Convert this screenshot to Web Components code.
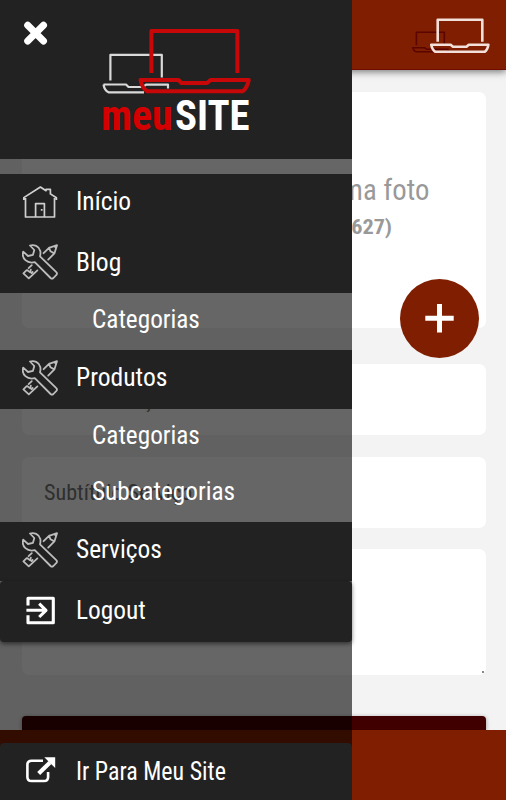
<!DOCTYPE html>
<html lang="pt-BR">
<head>
    <meta charset="UTF-8">
    <meta name="viewport" content="width=device-width, initial-scale=1.0">
    <title>meuSITE</title>
    <style>
        html, body {
            margin: 0;
            height: 100%;
            overflow: hidden;
            background: #f3f3f3;
            font-family: "Roboto Condensed", Roboto, "Liberation Sans", sans-serif;
            font-stretch: 75%;
        }
    </style>
</head>
<body>
    <site-app></site-app>

    <script>
        // small helper: every element of the page gets its styles and markup the same way
        function define(name, html, ready) {
            const template = document.createElement('template');
            template.innerHTML = html;
            customElements.define(name, class extends HTMLElement {
                constructor() {
                    super();
                    this.attachShadow({ mode: 'open' }).appendChild(template.content.cloneNode(true));
                }
                connectedCallback() {
                    if (ready) ready(this, this.shadowRoot);
                }
            });
        }

        const icons = {
            home: `<svg viewBox="22 184 36 36" width="36" height="36" fill="none" stroke="#d0d0d0" stroke-width="1.7" stroke-linejoin="round">
                <path d="M25.5 198V217H54.5V198M23.8 200V197.6L40.4 187L46 190.7V189.4H50.4V193.9L56.4 197.8V200"/>
                <path d="M35.6 217V203.6H44.4V217M40.8 209.8H42.6"/></svg>`,
            tools: `<svg viewBox="0 0 36 36" width="36" height="36" fill="none" stroke="#bdbdbd" stroke-width="1.8" stroke-linejoin="round" stroke-linecap="round">
                <path d="M8 1.5C12 .2 17 2 18.3 7C18.7 9 18.5 10.4 18 12.3L34.3 28.2Q35.6 29.4 34.4 30.8L31.4 34Q30 35.2 28.6 34L12.8 18.2C5.2 20 -.8 14.6 1.2 7.6L6 12L11 10.8L12.3 6Z"/>
                <path d="M21.6 9.2L27 3.8L35 1.2L32.4 9.4L26.2 15.6M27 3.8L28.4 7.2L32.4 9.4M32.8 2.6L33.6 3.4"/>
                <path d="M9.8 21.2L6.6 24.2M4.4 26.4L1.4 29.4L6.8 34.3L15.4 26.4M5 26L8.2 28.4L8.8 25.6M9.6 29L10.6 28"/></svg>`,
            logout: `<svg viewBox="0 0 36 36" width="36" height="36" fill="none" stroke="#fff" stroke-width="3.1" stroke-linejoin="round">
                <path d="M6 13.5V6.2H31.3V30.8H6V23.2"/><path d="M4.4 18.3H23.5M17.2 11.6L24 18.3L17.2 25"/></svg>`,
            external: `<svg viewBox="0 0 36 36" width="36" height="36" fill="none" stroke="#fff" stroke-width="2.6">
                <path d="M21 7.8H9.5Q5.4 7.8 5.4 11.8V23.9Q5.4 28 9.5 28H22Q26.1 28 26.1 23.9V19"/>
                <path d="M16.7 20.6L28 9.5" stroke-width="4.2"/><path d="M22.3 4.3H33.2V15Z" fill="#fff" stroke="none"/></svg>`
        };

        // text of a fixed width; the glyphs are condensed or widened to fill it
        define('fit-text', `
            <style>
                :host { display: block; white-space: nowrap; }
                span { display: inline-block; transform-origin: 0 50%; }
            </style>
            <span><slot></slot></span>`, (host, root) => {
            const span = root.querySelector('span');
            const width = Number(host.getAttribute('width'));
            host.style.width = width + 'px';
            span.style.transform = `scaleX(${width / span.offsetWidth})`;
        });

        define('top-bar', `
            <style>
                :host {
                    display: flex;
                    flex: none;
                    justify-content: flex-end;
                    box-sizing: border-box;
                    height: 70px;
                    padding: 18px 16px 0 0;
                    background: #7f1e00;
                    border-bottom: 1px solid #700d00;
                    box-shadow: 0 2px 7px rgba(0, 0, 0, .5);
                }
            </style>
            <svg viewBox="411 18 79 36" width="79" height="36" fill="none" stroke-linejoin="round">
                <g stroke="#5a0500" stroke-width="1.6">
                    <path d="M416.4 45.3V32.3H444.3V44"/>
                    <path d="M412.8 47.8H424.6L426.5 49.2H448V51.8H416Q413.4 50.8 412.8 47.8Z"/>
                </g>
                <g stroke="#f3e0da" stroke-width="2.6">
                    <path d="M437.7 41.7V19.8H482.3V41.7"/>
                    <path d="M431.2 44.8H450.6L453 46.8H466.5L468.8 44.8H488.4Q487.4 50.2 484.6 51.8H435.4Q432.4 50.2 431.2 44.8Z"/>
                </g>
            </svg>`);

        define('form-card', `
            <style>
                :host {
                    display: block;
                    box-sizing: border-box;
                    background: #fff;
                    border-radius: 7px;
                    color: #757575;
                    font-size: 22px;
                }
            </style>
            <slot></slot>`);

        define('add-button', `
            <style>
                :host {
                    display: grid;
                    place-items: center;
                    width: 79px;
                    height: 79px;
                    border-radius: 50%;
                    background: #7f1e00;
                }
            </style>
            <svg viewBox="0 0 30 30" width="30" height="30" stroke="#fff" stroke-width="5"><path d="M.3 14.3H28.7M14.5 .1V28.5"/></svg>`);

        define('site-form', `
            <style>
                :host {
                    display: flex;
                    flex-direction: column;
                    padding: 22px 20px 0 22px;
                }
                .photo {
                    position: relative;
                    height: 236px;
                    margin-bottom: 36px;
                    padding: 79px 57px 0 0;
                    color: #999;
                }
                .photo fit-text { margin-left: auto; }
                .title { font-size: 30px; line-height: 38px; }
                .size { font-size: 20.5px; line-height: 37px; font-weight: 700; margin-right: 37px; }
                add-button { position: absolute; right: 7px; bottom: -30px; }
                .field { height: 71px; margin-bottom: 22px; padding: 23px 0 0 22px; line-height: 26px; }
                .field.low { margin-bottom: 21px; }
                .message { position: relative; height: 126px; }
                .grip {
                    position: absolute;
                    right: 2px;
                    bottom: 2px;
                    width: 2px;
                    height: 2px;
                    background: #888;
                }
                .submit {
                    height: 14px;
                    margin-top: 41px;
                    background: #400000;
                    border-radius: 4px 4px 0 0;
                    box-shadow: 0 1px 4px rgba(0, 0, 0, .4);
                }
            </style>
            <form-card class="photo">
                <fit-text class="title" width="218">Selecione uma foto</fit-text>
                <fit-text class="size" width="103">(1200x627)</fit-text>
                <add-button></add-button>
            </form-card>
            <form-card class="field"><fit-text width="120">Título Serviço</fit-text></form-card>
            <form-card class="field low"><fit-text width="148">Subtítulo Serviço</fit-text></form-card>
            <form-card class="message"><div class="grip"></div></form-card>
            <div class="submit"></div>`);

        define('menu-item', `
            <style>
                :host {
                    display: flex;
                    align-items: center;
                    gap: 17.5px;
                    box-sizing: border-box;
                    height: 59px;
                    padding: 0 0 2px 22px;
                    background: #222;
                    color: #fff;
                    font-size: 25px;
                    line-height: 30px;
                }
                :host([sub]) { height: 56.5px; padding-left: 91.5px; background: none; }
                .icon { width: 36px; height: 36px; }
                :host([sub]) .icon { display: none; }
            </style>
            <div class="icon"></div>
            <slot></slot>`, (host, root) => {
            root.querySelector('.icon').innerHTML = icons[host.getAttribute('icon')] || '';
        });

        define('site-logo', `
            <style>
                :host { display: flex; flex-direction: column; width: 150px; }
                .name {
                    display: flex;
                    gap: 2px;
                    font-size: 43px;
                    line-height: 42px;
                    font-weight: 700;
                    color: #fff;
                }
                .red { color: #d40000; }
            </style>
            <svg viewBox="101 26 150 68" width="150" height="68" fill="none" stroke-linejoin="round">
                <g stroke="#d9d9d9" stroke-width="2.2">
                    <path d="M110.4 80.5V54.8H161.8V77.5"/>
                    <path d="M103.5 84.5H126L128.5 87H143L146 84.7H168V88.5M144 92.3H108.5Q104.5 90.5 103.5 84.5"/>
                </g>
                <g stroke="#c80808" stroke-width="4">
                    <path d="M151.4 73V31H237.4V73"/>
                    <path d="M140.5 80H178.5L181.5 83H207L210.5 80H248.8Q247 88 242.8 91.3H147.2Q142 88 140.5 80Z"/>
                </g>
            </svg>
            <div class="name"><fit-text class="red" width="72">meu</fit-text><fit-text width="75">SITE</fit-text></div>`);

        define('side-menu', `
            <style>
                :host {
                    display: flex;
                    flex-direction: column;
                    width: 352px;
                    height: 100%;
                    background: rgba(0, 0, 0, .6);
                }
                header {
                    display: flex;
                    box-sizing: border-box;
                    height: 159px;
                    margin-bottom: 15px;
                    padding: 21px 0 0 23px;
                    background: #222;
                }
                header svg { flex: none; }
                site-logo { margin: 5px 0 0 52.5px; }
                .first { height: 58px; }
                .second { height: 61px; }
                .second fit-text, .last fit-text, .bottom fit-text { padding-top: 2px; }
                .last { height: 61px; border-radius: 4px; box-shadow: 0 2px 4px rgba(0, 0, 0, .5); }
                .bottom { height: 57px; margin-top: auto; border-radius: 4px 4px 0 0; }
            </style>
            <header>
                <svg viewBox="0 0 25 25" width="25" height="25" stroke="#fff" stroke-width="7" stroke-linecap="round"><path d="M4.7 4.2L20.5 20M20.5 4.2L4.7 20"/></svg>
                <site-logo></site-logo>
            </header>
            <menu-item class="first" icon="home"><fit-text width="55">Início</fit-text></menu-item>
            <menu-item class="second" icon="tools"><fit-text width="45">Blog</fit-text></menu-item>
            <menu-item sub><fit-text width="108">Categorias</fit-text></menu-item>
            <menu-item icon="tools"><fit-text width="91">Produtos</fit-text></menu-item>
            <menu-item sub><fit-text width="108">Categorias</fit-text></menu-item>
            <menu-item sub><fit-text width="143.5">Subcategorias</fit-text></menu-item>
            <menu-item icon="tools"><fit-text width="85.5">Serviços</fit-text></menu-item>
            <menu-item class="last" icon="logout"><fit-text width="70">Logout</fit-text></menu-item>
            <menu-item class="bottom" icon="external"><fit-text width="149.5">Ir Para Meu Site</fit-text></menu-item>`);

        define('site-app', `
            <style>
                :host {
                    display: flex;
                    flex-direction: column;
                    position: relative;
                    height: 100vh;
                    overflow: hidden;
                }
                site-form { flex: 1; }
                footer { flex: none; height: 70px; background: #7f1e00; position: relative; }
                /* the open drawer lies over the page */
                side-menu { position: absolute; top: 0; left: 0; }
            </style>
            <top-bar></top-bar>
            <site-form></site-form>
            <footer></footer>
            <side-menu></side-menu>`);
    </script>
</body>
</html>
